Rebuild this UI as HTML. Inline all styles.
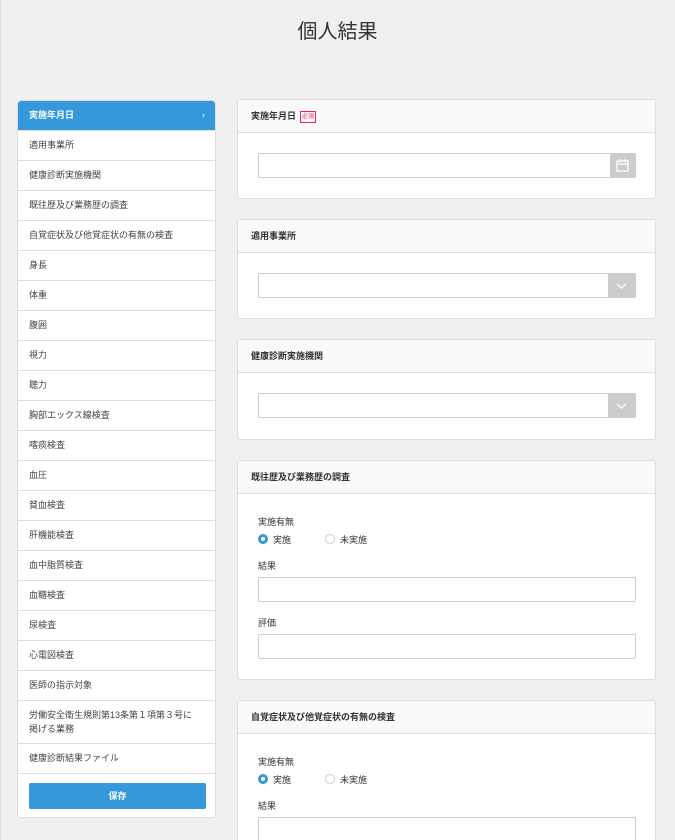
<!DOCTYPE html>
<html><head><meta charset="utf-8"><style>
*{box-sizing:border-box;margin:0;padding:0}
html{overflow:hidden;width:675px;height:840px}
body{width:675px;height:840px;overflow:hidden;background:#f0f0f0;font-family:"Liberation Sans","Noto Sans CJK JP",sans-serif;color:#333;position:relative}
body:before{content:"";position:absolute;left:0;top:0;width:1px;height:840px;background:#ddd}
h1{position:absolute;top:15px;left:0;width:675px;text-align:center;font-size:20px;font-weight:normal;color:#333}
.side{position:absolute;left:17px;top:100px;width:199px;height:718px;background:#fff;border:1px solid #ddd;border-radius:3px}
.side div{height:30px;line-height:29px;padding-left:11px;font-size:9px;border-bottom:1px solid #ddd;color:#444}
.side div.act{background:#3498db;color:#fff;font-weight:bold;border-radius:3px 3px 0 0;position:relative}
.side div.act:after{content:"›";position:absolute;right:10px;top:0;color:#cde}
.side div.two{height:43px;line-height:14px;padding-top:7px;padding-right:16px}
.btn{position:absolute;left:11px;top:682px;width:177px;height:26px;background:#3498db;color:#fff;font-size:9px;font-weight:bold;text-align:center;line-height:26px;border-radius:2px}
.p{position:absolute;left:237px;width:419px;background:#fff;border:1px solid #ddd;border-radius:3px}
.ph{height:33px;background:#f9f9f9;border-bottom:1px solid #ddd;font-size:9px;font-weight:bold;padding-left:13px;line-height:32px}
.req{display:inline-block;border:1px solid #e4285a;color:#e4285a;font-size:6px;line-height:10px;padding:0 1px;margin-left:4px;vertical-align:1px;font-weight:normal}
.in{position:absolute;left:20px;width:378px;height:25px;border:1px solid #ccc;border-radius:2px;background:#fff}
.ic{position:absolute;right:0;top:0;width:25px;height:23px;background:#ccc}
.lb{position:absolute;left:20px;font-size:9px;color:#333}
.rd{position:absolute;left:20px;font-size:9px}
.c{display:inline-block;width:10px;height:10px;border-radius:50%;vertical-align:-1px;margin-right:5px}
</style></head><body>
<h1>個人結果</h1>
<div class="side">
<div class="act">実施年月日</div><div>適用事業所</div><div>健康診断実施機関</div><div>既往歴及び業務歴の調査</div><div>自覚症状及び他覚症状の有無の検査</div><div>身長</div><div>体重</div><div>腹囲</div><div>視力</div><div>聴力</div><div>胸部エックス線検査</div><div>喀痰検査</div><div>血圧</div><div>貧血検査</div><div>肝機能検査</div><div>血中脂質検査</div><div>血糖検査</div><div>尿検査</div><div>心電図検査</div><div>医師の指示対象</div><div class="two">労働安全衛生規則第13条第１項第３号に<br>掲げる業務</div><div>健康診断結果ファイル</div>
<span class="btn">保存</span>
</div>
<div class="p" style="top:99px;height:100px"><div class="ph">実施年月日<span class="req">必須</span></div>
<div class="in" style="top:53px"><div class="ic"><svg width="25" height="23"><rect x="7" y="7" width="11" height="10" fill="none" stroke="#fff" stroke-width="1.3"/><line x1="7" y1="10" x2="18" y2="10" stroke="#fff" stroke-width="1.3"/><line x1="10" y1="5" x2="10" y2="8" stroke="#fff"/><line x1="15" y1="5" x2="15" y2="8" stroke="#fff"/></svg></div></div></div>
<div class="p" style="top:219px;height:100px"><div class="ph">適用事業所</div>
<div class="in" style="top:53px"><div class="ic" style="width:27px"><svg width="27" height="23"><polyline points="9,10 13.5,14 18,10" fill="none" stroke="#fff" stroke-width="1.5"/></svg></div></div></div>
<div class="p" style="top:339px;height:101px"><div class="ph">健康診断実施機関</div>
<div class="in" style="top:53px"><div class="ic" style="width:27px"><svg width="27" height="23"><polyline points="9,10 13.5,14 18,10" fill="none" stroke="#fff" stroke-width="1.5"/></svg></div></div></div>
<div class="p" style="top:460px;height:220px"><div class="ph">既往歴及び業務歴の調査</div>
<div class="lb" style="top:54px">実施有無</div>
<div class="rd" style="top:72px"><span class="c" style="border:3px solid #3498db"></span>実施<span style="display:inline-block;width:34px"></span><span class="c" style="border:1px solid #ccc"></span>未実施</div>
<div class="lb" style="top:98px">結果</div>
<div class="in" style="top:116px"></div>
<div class="lb" style="top:155px">評価</div>
<div class="in" style="top:173px"></div></div>
<div class="p" style="top:700px;height:160px"><div class="ph">自覚症状及び他覚症状の有無の検査</div>
<div class="lb" style="top:54px">実施有無</div>
<div class="rd" style="top:72px"><span class="c" style="border:3px solid #3498db"></span>実施<span style="display:inline-block;width:34px"></span><span class="c" style="border:1px solid #ccc"></span>未実施</div>
<div class="lb" style="top:98px">結果</div>
<div class="in" style="top:116px"></div></div>
</body></html>
